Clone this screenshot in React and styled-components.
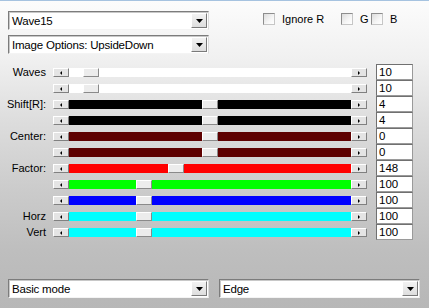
import React from 'react';
import styled, { createGlobalStyle } from 'styled-components';

const Global = createGlobalStyle`
  html, body { margin: 0; padding: 0; }
  body {
    width: 429px;
    height: 308px;
    overflow: hidden;
    font-family: "Liberation Sans", Arial, sans-serif;
    font-size: 11px;
    color: #000;
  }
`;

const Window = styled.div`
  box-sizing: border-box;
  width: 429px;
  height: 308px;
  border-top: 1px solid #a6c3e0;
  background: linear-gradient(
    to bottom,
    #fcfcfc 0px,
    #f1f1f1 55px,
    #dddddd 120px,
    #cbcbcb 190px,
    #bebebe 250px,
    #b7b7b7 307px
  );
  padding-top: 10px;
  display: flex;
  flex-direction: column;
`;

const Header = styled.div`
  display: flex;
  align-items: flex-start;
  padding-left: 8px;
`;

const SelectColumn = styled.div`
  display: flex;
  flex-direction: column;
  gap: 5px;
  width: 201px;
`;

const SelectBox = styled.div`
  box-sizing: border-box;
  width: 201px;
  height: 19px;
  display: flex;
  align-items: center;
  background: #fff;
  border-top: 1px solid #7c7c7c;
  border-left: 1px solid #7c7c7c;
  border-right: 1px solid #dcdcdc;
  border-bottom: 1px solid #f4f4f4;
  box-shadow: inset 1px 1px 0 #c8c8c8;
`;

const SelectText = styled.span`
  flex: 1;
  padding-left: 3px;
  font-size: 11.5px;
  letter-spacing: -0.2px;
  white-space: nowrap;
  overflow: hidden;
`;

const DropButton = styled.div`
  box-sizing: border-box;
  width: 16px;
  height: 15px;
  margin-right: 1px;
  display: flex;
  align-items: center;
  justify-content: center;
  background: linear-gradient(#f2f2f2, #dedede);
  border-top: 1px solid #ffffff;
  border-left: 1px solid #ffffff;
  border-right: 1px solid #7a7a7a;
  border-bottom: 1px solid #7a7a7a;
`;

const Checks = styled.div`
  display: flex;
  align-items: center;
  margin-left: 54px;
  margin-top: 1px;
`;

const CheckItem = styled.label`
  display: flex;
  align-items: center;
  gap: 7px;
  width: ${p => p.$w}px;
  height: 13px;
  font-size: 11px;
`;

const CheckBox = styled.span`
  box-sizing: border-box;
  width: 12px;
  height: 12px;
  border: 1px solid #8d8d8d;
  border-right-color: #c6c6c6;
  border-bottom-color: #c6c6c6;
  background: linear-gradient(135deg, #dcdcdc, #f6f6f6 60%, #ffffff);
`;

const Rows = styled.div`
  display: flex;
  flex-direction: column;
  margin-top: 10px;
`;

const Row = styled.div`
  display: flex;
  align-items: flex-start;
  height: 16px;
`;

const Label = styled.span`
  width: 46px;
  line-height: 16px;
  text-align: right;
  font-size: 11px;
  white-space: nowrap;
`;

const Slider = styled.div`
  display: flex;
  width: 314px;
  height: 9px;
  margin-top: 4px;
  margin-left: 7px;
`;

const ArrowButton = styled.div`
  box-sizing: border-box;
  width: 16px;
  height: 9px;
  display: flex;
  align-items: center;
  justify-content: center;
  background: #e4e4e4;
  border-top: 1px solid #ffffff;
  border-left: 1px solid #ffffff;
  border-right: 1px solid #808080;
  border-bottom: 1px solid #808080;
`;

const Tri = styled.span`
  width: 0;
  height: 0;
  border-top: 2px solid transparent;
  border-bottom: 2px solid transparent;
  ${p => (p.$dir === 'left'
    ? 'border-right: 2px solid #000;'
    : 'border-left: 2px solid #000;')}
`;

const Track = styled.div`
  flex: 1;
  display: flex;
  background: ${p => p.$color};
`;

const TrackLead = styled.div`
  width: ${p => p.$pos}px;
`;

const Thumb = styled.div`
  box-sizing: border-box;
  width: 16px;
  height: 9px;
  background: #ececec;
  border-top: 1px solid #ffffff;
  border-left: 1px solid #ffffff;
  border-right: 1px solid #8a8a8a;
  border-bottom: 1px solid #8a8a8a;
`;

const NumberBox = styled.div`
  box-sizing: border-box;
  width: 37px;
  height: 16px;
  margin-left: 9px;
  padding-left: 2px;
  line-height: 14px;
  font-size: 11.5px;
  background: #fff;
  border-top: 1px solid #707070;
  border-left: 1px solid #707070;
  border-right: 1px solid #9a9a9a;
  border-bottom: 1px solid #9a9a9a;
`;

const Footer = styled.div`
  display: flex;
  gap: 10px;
  padding-left: 8px;
  margin-top: 39px;
`;

function Select({ text }) {
  return (
    <SelectBox>
      <SelectText>{text}</SelectText>
      <DropButton>
        <svg width="7" height="4" viewBox="0 0 7 4">
          <polygon points="0,0 7,0 3.5,4" fill="#000" />
        </svg>
      </DropButton>
    </SelectBox>
  );
}

const rows = [
  { label: 'Waves', color: '#ffffff', pos: 14, value: '10' },
  { label: '', color: '#ffffff', pos: 14, value: '10' },
  { label: 'Shift[R]:', color: '#000000', pos: 133, value: '4' },
  { label: '', color: '#000000', pos: 133, value: '4' },
  { label: 'Center:', color: '#5e0000', pos: 133, value: '0' },
  { label: '', color: '#5e0000', pos: 133, value: '0' },
  { label: 'Factor:', color: '#ff0000', pos: 99, value: '148' },
  { label: '', color: '#00ff00', pos: 67, value: '100' },
  { label: '', color: '#0000ff', pos: 67, value: '100' },
  { label: 'Horz', color: '#00ffff', pos: 67, value: '100' },
  { label: 'Vert', color: '#00ffff', pos: 67, value: '100' },
];

export default function App() {
  return (
    <>
      <Global />
      <Window>
        <Header>
          <SelectColumn>
            <Select text="Wave15" />
            <Select text="Image Options: UpsideDown" />
          </SelectColumn>
          <Checks>
            <CheckItem $w={78}><CheckBox />Ignore R</CheckItem>
            <CheckItem $w={30}><CheckBox />G</CheckItem>
            <CheckItem $w={30}><CheckBox />B</CheckItem>
          </Checks>
        </Header>
        <Rows>
          {rows.map((r, i) => (
            <Row key={i}>
              <Label>{r.label}</Label>
              <Slider>
                <ArrowButton><Tri $dir="left" /></ArrowButton>
                <Track $color={r.color}>
                  <TrackLead $pos={r.pos} />
                  <Thumb />
                </Track>
                <ArrowButton><Tri $dir="right" /></ArrowButton>
              </Slider>
              <NumberBox>{r.value}</NumberBox>
            </Row>
          ))}
        </Rows>
        <Footer>
          <Select text="Basic mode" />
          <Select text="Edge" />
        </Footer>
      </Window>
    </>
  );
}
